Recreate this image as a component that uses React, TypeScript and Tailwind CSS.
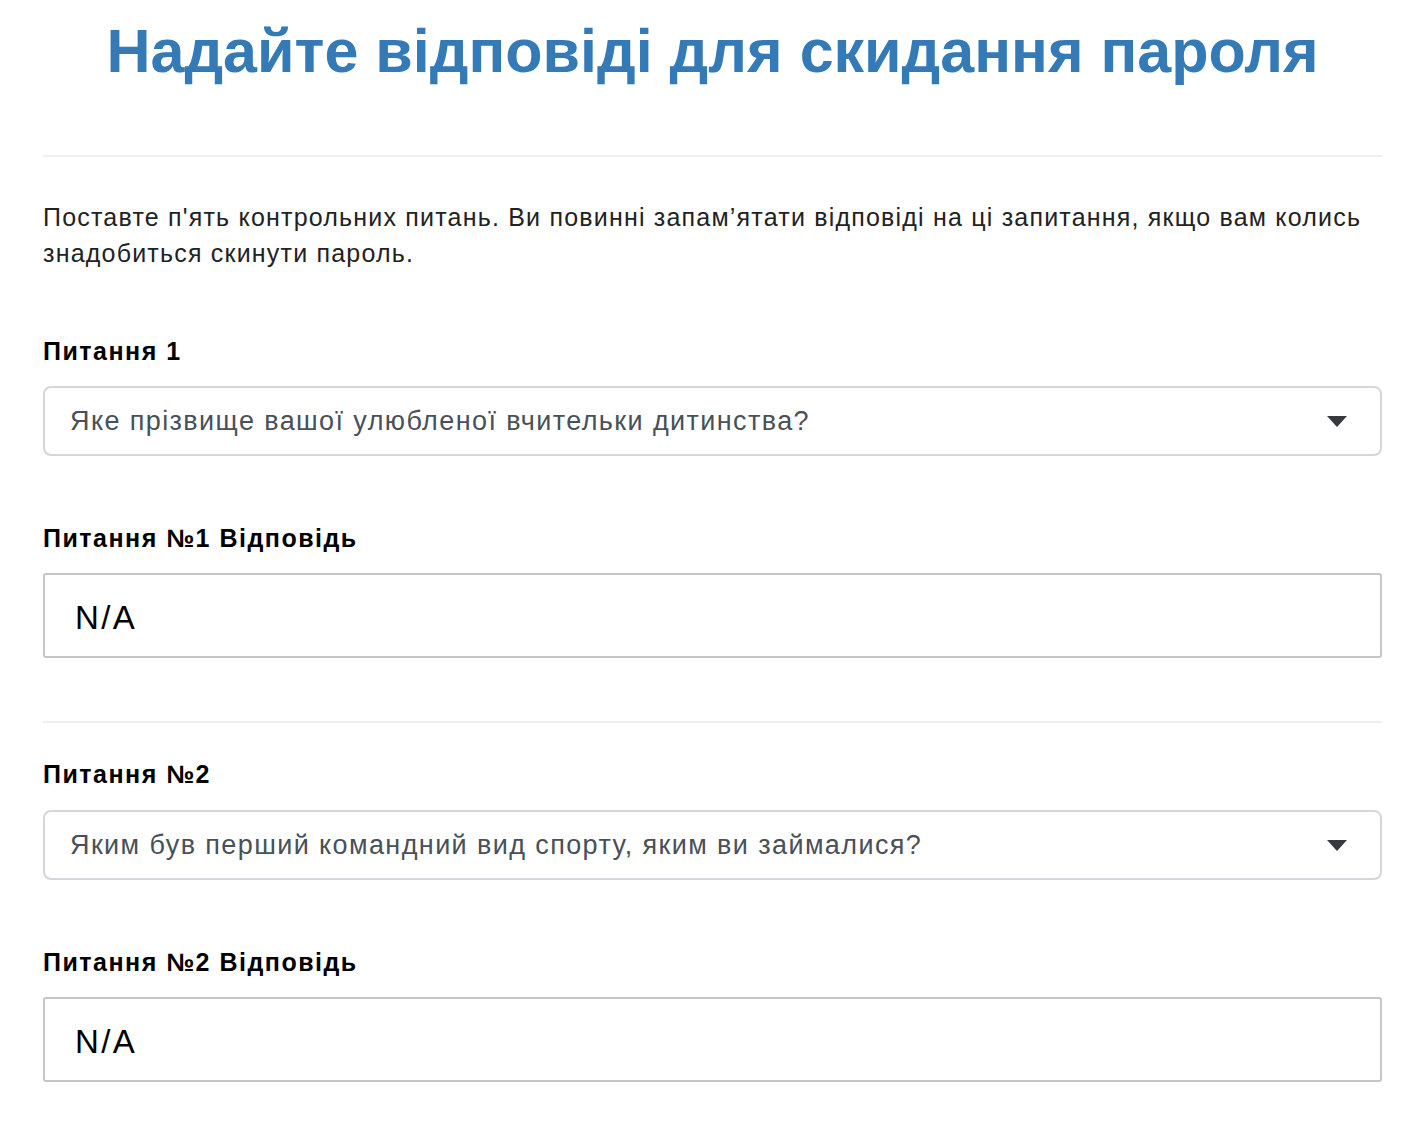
import React from "react";

function Caret() {
  return (
    <svg width="20" height="11" viewBox="0 0 20 11" className="shrink-0">
      <polygon points="0,0 20,0 10,11" fill="#343a40" />
    </svg>
  );
}

function SelectBox({ text }: { text: string }) {
  return (
    <div className="flex h-[70px] items-center justify-between rounded-[8px] border-2 border-[#d3d7db] bg-white pl-[25px] pr-[33px]">
      <span className="text-[27px] tracking-[1.4px] text-[#495057]">{text}</span>
      <Caret />
    </div>
  );
}

function AnswerBox() {
  return (
    <div className="flex h-[85px] items-center rounded-[3px] border-2 border-[#c6c6c6] bg-white pl-[30px] pt-[4px]">
      <span className="text-[33px] tracking-[2.4px] text-black">N/A</span>
    </div>
  );
}

function Label({ children }: { children: React.ReactNode }) {
  return <div className="text-[25px] font-bold leading-[36px] tracking-[1.5px] text-black">{children}</div>;
}

export default function App() {
  return (
    <div
      className="min-h-screen bg-white pl-[43px] pr-[30px] pb-[52px]"
      style={{ fontFamily: '"Liberation Sans", Arial, sans-serif' }}
    >
      <h1 className="pt-[18px] text-center text-[61px] font-bold leading-[67px] text-[#337ab7]">
        Надайте відповіді для скидання пароля
      </h1>
      <div className="mt-[70px] h-[2px] bg-[#eeeeee]" />
      <p className="mt-[42px] text-[25px] leading-[36px] tracking-[1.2px] text-[#222]">
        Поставте п'ять контрольних питань. Ви повинні запам’ятати відповіді на ці запитання, якщо вам колись
        знадобиться скинути пароль.
      </p>

      <div className="mt-[62px]">
        <Label>Питання 1</Label>
      </div>
      <div className="mt-[17px]">
        <SelectBox text="Яке прізвище вашої улюбленої вчительки дитинства?" />
      </div>

      <div className="mt-[64px]">
        <Label>Питання №1 Відповідь</Label>
      </div>
      <div className="mt-[17px]">
        <AnswerBox />
      </div>

      <div className="mt-[63px] h-[2px] bg-[#eeeeee]" />

      <div className="mt-[33px]">
        <Label>Питання №2</Label>
      </div>
      <div className="mt-[18px]">
        <SelectBox text="Яким був перший командний вид спорту, яким ви займалися?" />
      </div>

      <div className="mt-[64px]">
        <Label>Питання №2 Відповідь</Label>
      </div>
      <div className="mt-[17px]">
        <AnswerBox />
      </div>
    </div>
  );
}
